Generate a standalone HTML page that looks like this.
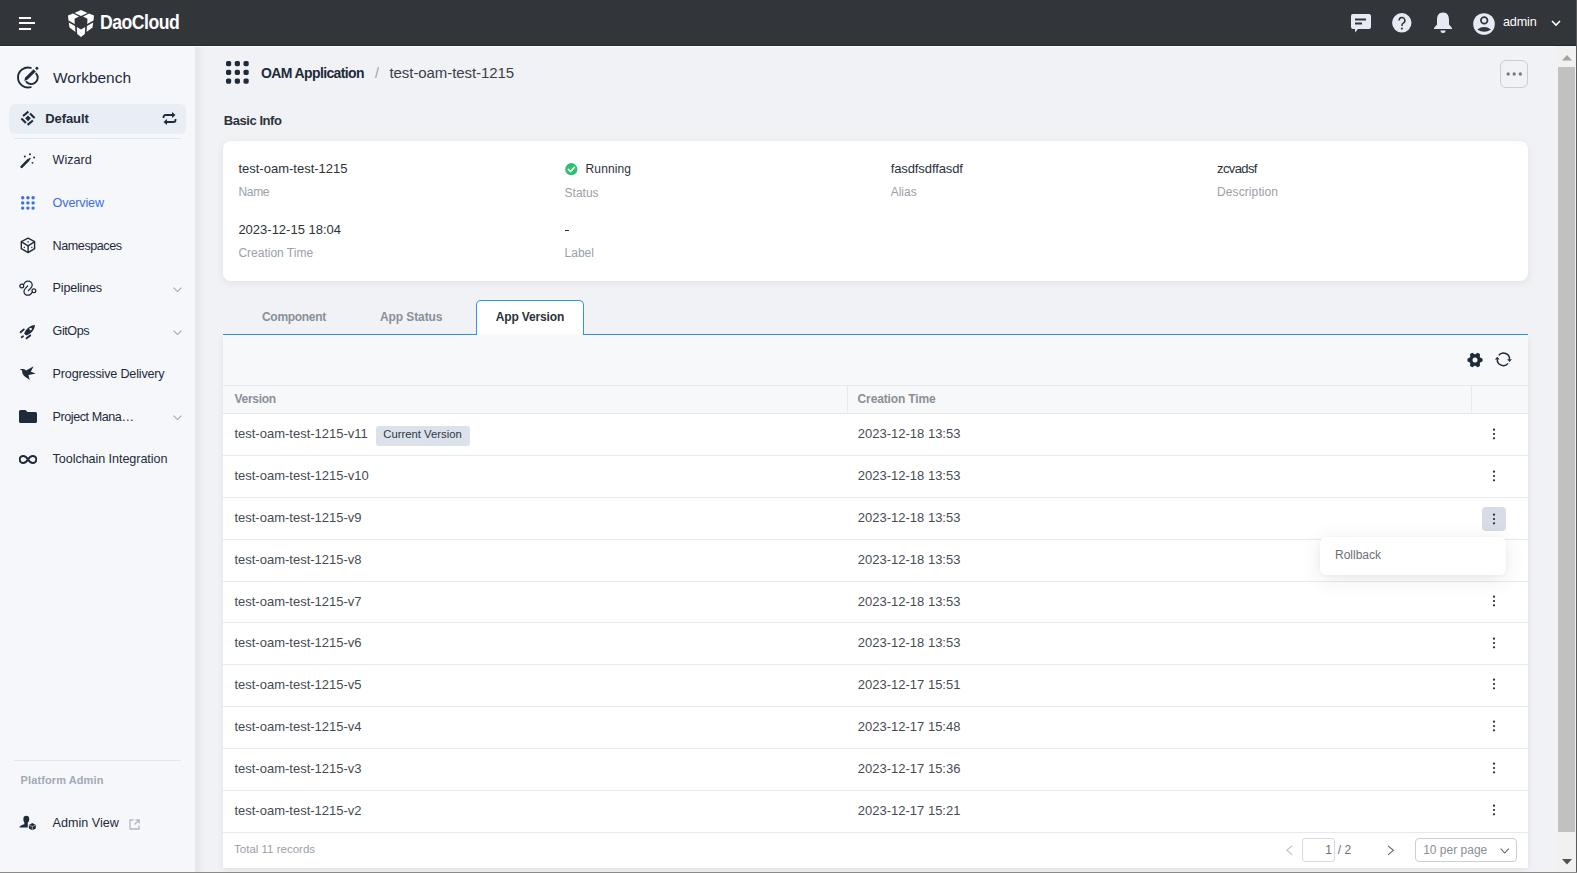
<!DOCTYPE html>
<html><head><meta charset="utf-8"><title>OAM Application</title>
<style>
html,body{margin:0;padding:0;width:1577px;height:873px;overflow:hidden;font-family:"Liberation Sans", sans-serif;}
.t{position:absolute;white-space:nowrap;line-height:1;}
svg{display:block}
</style></head><body>
<div style="position:absolute;left:0px;top:0px;width:1577px;height:873px;background:#f1f2f6"></div>
<div style="position:absolute;left:0px;top:46px;width:195px;height:827px;background:#f5f7fb"></div>
<div style="position:absolute;left:195px;top:46px;width:10px;height:827px;background:linear-gradient(to right, rgba(0,0,0,0.05), rgba(0,0,0,0))"></div>
<div style="position:absolute;left:0px;top:0px;width:1577px;height:45px;background:#32353a"></div>
<div style="position:absolute;left:0px;top:45px;width:1577px;height:1px;background:#26282c"></div>
<div style="position:absolute;left:0px;top:46px;width:1577px;height:1px;background:#ffffff"></div>
<svg style="position:absolute;left:19px;top:17px;" width="17" height="13" viewBox="0 0 17 13"><rect x="0" y="0" width="12" height="2" fill="#fff"/><rect x="0" y="5" width="16" height="2" fill="#fff"/><rect x="0" y="11" width="12" height="2" fill="#fff"/></svg>
<svg style="position:absolute;left:68px;top:10px;" width="26" height="27" viewBox="0 0 26 27"><g fill="#fff"><path d="M13 0 L19.5 3 L13 6 L6.5 3 Z"/><path d="M0 5.5 L5 3.5 L11 6.5 L6.5 8.8 L6.8 14 L0.5 10.5 Z"/><path d="M26 5.5 L21 3.5 L15 6.5 L19.5 8.8 L19.2 14 L25.5 10.5 Z"/><path d="M0.8 12.5 L7 16 L7.5 22 L1.5 17.5 Z"/><path d="M25.2 12.5 L19 16 L18.5 22 L24.5 17.5 Z"/><path d="M8.8 17 L13 19.5 L17.2 17 L16.8 24 L13 27 L9.2 24 Z"/></g></svg>
<div class="t" style="left:100px;top:11px;font-size:21px;color:#fff;font-weight:bold;letter-spacing:-0.6px;transform:scaleX(0.84);transform-origin:0 0;">DaoCloud</div>
<svg style="position:absolute;left:1351px;top:14px;" width="20" height="19" viewBox="0 0 20 19"><path d="M2 0 H18 A2 2 0 0 1 20 2 V13 A2 2 0 0 1 18 15 H7 L4 18.5 L4 15 H2 A2 2 0 0 1 0 13 V2 A2 2 0 0 1 2 0 Z" fill="#e6ebf3"/><rect x="4" y="4.5" width="11" height="2" fill="#32353a"/><rect x="4" y="8.5" width="7" height="2" fill="#32353a"/></svg>
<svg style="position:absolute;left:1391.5px;top:12.5px;" width="20" height="20" viewBox="0 0 20 20"><circle cx="9.8" cy="9.8" r="9.7" fill="#e6ebf3"/><path d="M7.1 7.4 A2.9 2.9 0 1 1 11.2 10.1 C10.2 10.7 9.9 11.3 9.9 12.9" stroke="#32353a" stroke-width="1.5" fill="none"/><circle cx="9.9" cy="15.6" r="1.05" fill="#32353a"/></svg>
<svg style="position:absolute;left:1433px;top:12px;" width="20" height="21" viewBox="0 0 20 21"><path d="M10 0.5 C14.5 0.5 16 4 16 8 V12.5 L19 16 V17 H1 V16 L4 12.5 V8 C4 4 5.5 0.5 10 0.5 Z" fill="#e6ebf3"/><path d="M7.5 18.5 H12.5 A2.5 2.5 0 0 1 7.5 18.5 Z" fill="#e6ebf3"/></svg>
<svg style="position:absolute;left:1473px;top:12.5px;" width="22" height="22" viewBox="0 0 22 22"><circle cx="11" cy="11" r="10.8" fill="#e6ebf3"/><circle cx="11.2" cy="7.4" r="3.3" fill="none" stroke="#32353a" stroke-width="1.7"/><path d="M4.3 16.5 Q11.2 11.6 18 16.5 Q11.2 21.2 4.3 16.5 Z" fill="#32353a"/></svg>
<div class="t" style="left:1503px;top:16px;font-size:12.6px;color:#fff;letter-spacing:-0.15px;">admin</div>
<svg style="position:absolute;left:1551px;top:20px;" width="10" height="7" viewBox="0 0 10 7"><path d="M1 1 L5 5 L9 1" stroke="#fff" stroke-width="1.6" fill="none"/></svg>
<svg style="position:absolute;left:12px;top:62px;" width="32" height="30" viewBox="0 0 32 30"><g fill="none" stroke="#1f2b3a" stroke-width="1.9" stroke-linecap="round"><path d="M18.8 5.9 A10 10 0 1 0 18.8 25.1"/><path d="M24.2 11.6 A6.3 6.3 0 1 1 14.4 19.8"/></g><path d="M12.2 19 L13.2 15.6 L21.6 7.2 L23.8 9.4 L15.4 17.8 Z" fill="#1f2b3a"/><rect x="23.6" y="5" width="2.6" height="2.6" transform="rotate(45 24.9 6.3)" fill="#1f2b3a"/></svg>
<div class="t" style="left:53px;top:70px;font-size:15.5px;color:#1f2b3a;">Workbench</div>
<div style="position:absolute;left:9px;top:104px;width:177px;height:30px;background:#e9edf4;border-radius:6px"></div>
<svg style="position:absolute;left:16px;top:106px;" width="24" height="24" viewBox="0 0 24 24"><g stroke="#1f2b3a" stroke-width="2.1" stroke-linecap="butt"><path d="M7.0 10.0 L12.4 5.6"/><path d="M14.0 7.6 L18.6 12.0"/><path d="M16.9 14.5 L11.6 18.9"/><path d="M5.4 12.5 L9.9 16.9"/></g><rect x="10" y="10.3" width="4" height="4" transform="rotate(45 12 12.3)" fill="#1f2b3a"/></svg>
<div class="t" style="left:45.3px;top:112px;font-size:13px;color:#1f2b3a;font-weight:bold;letter-spacing:-0.1px;">Default</div>
<svg style="position:absolute;left:162px;top:112px;" width="15" height="13" viewBox="0 0 15 13"><path d="M1.5 6 V5 A2 2 0 0 1 3.5 3 H12" stroke="#1f2b3a" stroke-width="1.8" fill="none"/><path d="M10 0 L13.5 3 L10 6 Z" fill="#1f2b3a"/><path d="M13.5 7 V8 A2 2 0 0 1 11.5 10 H3" stroke="#1f2b3a" stroke-width="1.8" fill="none"/><path d="M5 7 L1.5 10 L5 13 Z" fill="#1f2b3a"/></svg>
<div style="position:absolute;left:14px;top:138px;width:167px;height:1px;background:#e2e6ee"></div>
<div class="t" style="left:52.6px;top:154px;font-size:12.6px;color:#1f2b3a;letter-spacing:0px;">Wizard</div>
<div class="t" style="left:52.6px;top:197px;font-size:12.6px;color:#3a6fe0;letter-spacing:-0.15px;">Overview</div>
<div class="t" style="left:52.6px;top:240px;font-size:12.6px;color:#1f2b3a;letter-spacing:-0.45px;">Namespaces</div>
<div class="t" style="left:52.6px;top:282px;font-size:12.6px;color:#1f2b3a;letter-spacing:-0.2px;">Pipelines</div>
<div class="t" style="left:52.6px;top:325px;font-size:12.6px;color:#1f2b3a;letter-spacing:-0.45px;">GitOps</div>
<div class="t" style="left:52.6px;top:368px;font-size:12.6px;color:#1f2b3a;letter-spacing:-0.18px;">Progressive Delivery</div>
<div class="t" style="left:52.6px;top:411px;font-size:12.6px;color:#1f2b3a;letter-spacing:-0.45px;">Project Mana…</div>
<div class="t" style="left:52.6px;top:453px;font-size:12.6px;color:#1f2b3a;letter-spacing:-0.07px;">Toolchain Integration</div>
<svg style="position:absolute;left:16px;top:148px;" width="24" height="24" viewBox="0 0 24 24"><path d="M5.6 18.8 L12.2 12.2" stroke="#1f2b3a" stroke-width="2.6" stroke-linecap="round"/><path d="M12.6 11.8 L14 10.4" stroke="#1f2b3a" stroke-width="1.4" stroke-linecap="round"/><circle cx="14" cy="6.2" r="1" fill="#1f2b3a"/><circle cx="8.8" cy="8.5" r="1" fill="#1f2b3a"/><circle cx="18.1" cy="9.5" r="1" fill="#1f2b3a"/><circle cx="16.5" cy="14.8" r="0.9" fill="#1f2b3a"/></svg>
<svg style="position:absolute;left:21px;top:196px;" width="15" height="15" viewBox="0 0 15 15"><circle cx="1.7" cy="1.7" r="1.7" fill="#3a6fe0"/><circle cx="6.9" cy="1.7" r="1.7" fill="#3a6fe0"/><circle cx="12.1" cy="1.7" r="1.7" fill="#3a6fe0"/><circle cx="1.7" cy="6.9" r="1.7" fill="#3a6fe0"/><circle cx="6.9" cy="6.9" r="1.7" fill="#3a6fe0"/><circle cx="12.1" cy="6.9" r="1.7" fill="#3a6fe0"/><circle cx="1.7" cy="12.1" r="1.7" fill="#3a6fe0"/><circle cx="6.9" cy="12.1" r="1.7" fill="#3a6fe0"/><circle cx="12.1" cy="12.1" r="1.7" fill="#3a6fe0"/></svg>
<svg style="position:absolute;left:16px;top:234px;" width="24" height="24" viewBox="0 0 24 24"><g fill="none" stroke="#1f2b3a" stroke-width="1.4" stroke-linejoin="round"><path d="M12.1 4.2 L18.6 7.6 V14.7 L12.1 18.6 L5.3 14.7 V7.6 Z"/><path d="M5.5 7.8 L12.1 11.8 L18.4 7.8"/><path d="M12.1 11.8 V18.4"/><path d="M12.1 7.2 V8.6"/><path d="M7.8 13.2 L8.8 13.6"/><path d="M15.3 13.6 L16.3 13.2"/></g></svg>
<svg style="position:absolute;left:16px;top:276px;" width="24" height="24" viewBox="0 0 24 24"><g fill="none" stroke="#1f2b3a" stroke-width="1.25" stroke-linecap="round"><circle cx="5.8" cy="9.9" r="1.9"/><circle cx="17.9" cy="14.8" r="1.9"/><path d="M7.6 8.6 C8.5 6.4 10 5 12 5 C14.4 5 16.2 7 16.2 9.2 C16.2 10.6 15.4 11.6 12.4 14.5"/><path d="M11.6 10 L9.2 12.6 C7.6 14.2 7.6 16.8 9.1 18.2 C10.6 19.6 13.2 19.5 14.5 18.2 L16.4 16.2"/></g></svg>
<svg style="position:absolute;left:16px;top:320px;" width="24" height="24" viewBox="0 0 24 24"><path d="M19 4.9 C14.2 5.3 10.2 8.3 8.1 13.4 L10.3 15.6 C15.3 13.6 18.4 9.8 19 4.9 Z" fill="#1f2b3a"/><circle cx="14.6" cy="8.9" r="1.25" fill="#f5f7fb"/><g stroke="#1f2b3a" stroke-width="1.9" stroke-linecap="round"><path d="M4.6 12.2 L7.8 9.4"/><path d="M10.6 18.3 L14.2 15.4"/><path d="M5.7 17.2 L7.0 16.3"/></g></svg>
<svg style="position:absolute;left:16px;top:362px;" width="24" height="24" viewBox="0 0 24 24"><path d="M3.8 7.3 C6 6.8 8.5 7.3 10.2 8.4 L17.6 4.3 L14.8 9.7 L19.8 11.5 L12.5 13 L13.7 17.9 C11 16 8.2 14.5 7 12.5 C6.3 11 6.1 9.5 6 8.4 Z" fill="#1f2b3a"/></svg>
<svg style="position:absolute;left:19px;top:410px;" width="18" height="13" viewBox="0 0 18 13"><path d="M0 1.5 A1.5 1.5 0 0 1 1.5 0 H6.5 L8.5 2 H16.5 A1.5 1.5 0 0 1 18 3.5 V11.5 A1.5 1.5 0 0 1 16.5 13 H1.5 A1.5 1.5 0 0 1 0 11.5 Z" fill="#1f2b3a"/></svg>
<svg style="position:absolute;left:19px;top:455px;" width="18" height="9" viewBox="0 0 18 9"><path d="M9 4.5 C7.5 2 6 1 4.2 1 A3.5 3.5 0 0 0 4.2 8 C6 8 7.5 7 9 4.5 C10.5 2 12 1 13.8 1 A3.5 3.5 0 0 1 13.8 8 C12 8 10.5 7 9 4.5 Z" fill="none" stroke="#1f2b3a" stroke-width="2"/></svg>
<svg style="position:absolute;left:172.7px;top:286.6px;" width="9" height="5.5" viewBox="0 0 9 5.5"><path d="M0.6 0.6 L4.5 4.6 L8.4 0.6" stroke="#a4abb8" stroke-width="1.1" fill="none"/></svg>
<svg style="position:absolute;left:172.7px;top:329.6px;" width="9" height="5.5" viewBox="0 0 9 5.5"><path d="M0.6 0.6 L4.5 4.6 L8.4 0.6" stroke="#a4abb8" stroke-width="1.1" fill="none"/></svg>
<svg style="position:absolute;left:172.7px;top:414.6px;" width="9" height="5.5" viewBox="0 0 9 5.5"><path d="M0.6 0.6 L4.5 4.6 L8.4 0.6" stroke="#a4abb8" stroke-width="1.1" fill="none"/></svg>
<div style="position:absolute;left:14px;top:760px;width:167px;height:1px;background:#e2e6ee"></div>
<div class="t" style="left:20.6px;top:775px;font-size:11px;color:#a3a9b4;font-weight:bold;letter-spacing:0.1px;">Platform Admin</div>
<svg style="position:absolute;left:16px;top:811px;" width="24" height="24" viewBox="0 0 24 24"><path d="M7.4 7.6 A2.9 2.9 0 0 1 13.2 7.6 V9 A2.9 2.9 0 0 1 11.8 11.4 V16.6 H3.3 C3.6 14.8 5.8 13.6 8.3 13.2 V11.3 A2.9 2.9 0 0 1 7.4 9 Z" fill="#1f2b3a"/><path d="M16.3 12.1 L19.8 13.9 V17.6 L16.3 19.3 L12.9 17.6 V13.9 Z" fill="#1f2b3a"/><path d="M13.1 14 L16.3 15.6 L19.6 14 M16.3 15.6 V19.2" stroke="#c9d3e0" stroke-width="0.7" fill="none"/></svg>
<div class="t" style="left:52.6px;top:817px;font-size:12.6px;color:#1f2b3a;">Admin View</div>
<svg style="position:absolute;left:128.5px;top:818.5px;" width="11" height="11" viewBox="0 0 11 11"><path d="M4.5 1 H1 V10 H10 V6.5" stroke="#b2b8c3" stroke-width="1.3" fill="none"/><path d="M5.5 5.5 L10 1 M6.5 0.8 H10.2 V4.5" stroke="#b2b8c3" stroke-width="1.3" fill="none"/></svg>
<svg style="position:absolute;left:226.1px;top:61.3px;" width="24" height="24" viewBox="0 0 24 24"><rect x="0.0" y="0.0" width="5.2" height="5.2" rx="1.6" fill="#1f2b3a"/><rect x="8.75" y="0.0" width="5.2" height="5.2" rx="1.6" fill="#1f2b3a"/><rect x="17.5" y="0.0" width="5.2" height="5.2" rx="1.6" fill="#1f2b3a"/><rect x="0.0" y="8.75" width="5.2" height="5.2" rx="1.6" fill="#1f2b3a"/><rect x="8.75" y="8.75" width="5.2" height="5.2" rx="1.6" fill="#1f2b3a"/><rect x="17.5" y="8.75" width="5.2" height="5.2" rx="1.6" fill="#1f2b3a"/><rect x="0.0" y="17.5" width="5.2" height="5.2" rx="1.6" fill="#1f2b3a"/><rect x="8.75" y="17.5" width="5.2" height="5.2" rx="1.6" fill="#1f2b3a"/><rect x="17.5" y="17.5" width="5.2" height="5.2" rx="1.6" fill="#1f2b3a"/></svg>
<div class="t" style="left:261px;top:66px;font-size:14px;color:#1f2b3a;font-weight:bold;letter-spacing:-0.62px;">OAM Application</div>
<div class="t" style="left:375px;top:66px;font-size:14px;color:#9aa0a9;">/</div>
<div class="t" style="left:389.5px;top:65px;font-size:15px;color:#3a4049;letter-spacing:-0.07px;">test-oam-test-1215</div>
<div style="position:absolute;left:1500px;top:60px;width:26px;height:26px;border:1px solid #c9cfd9;border-radius:6px;"></div>
<svg style="position:absolute;left:1506px;top:71.5px;" width="16" height="4" viewBox="0 0 16 4"><circle cx="2.2" cy="2" r="1.65" fill="#727986"/><circle cx="8.2" cy="2" r="1.65" fill="#727986"/><circle cx="14.3" cy="2" r="1.65" fill="#727986"/></svg>
<div class="t" style="left:223.8px;top:114px;font-size:13px;color:#2c323b;font-weight:bold;letter-spacing:-0.45px;">Basic Info</div>
<div style="position:absolute;left:223px;top:141px;width:1305px;height:140px;background:#fff;border-radius:8px;box-shadow:0 2px 9px rgba(0,0,0,0.075)"></div>
<div class="t" style="left:238.4px;top:162px;font-size:13px;color:#2c323b;">test-oam-test-1215</div>
<div class="t" style="left:238.4px;top:186px;font-size:12px;color:#9ba0a8;letter-spacing:-0.3px;">Name</div>
<svg style="position:absolute;left:564.6px;top:163px;" width="13" height="13" viewBox="0 0 13 13"><circle cx="6.3" cy="6.2" r="6.1" fill="#2fbf71"/><path d="M3.4 6.4 L5.5 8.5 L9.4 4.4" stroke="#fff" stroke-width="1.7" fill="none" stroke-linecap="round" stroke-linejoin="round"/></svg>
<div class="t" style="left:585.6px;top:163px;font-size:12px;color:#2c323b;letter-spacing:0.1px;">Running</div>
<div class="t" style="left:564.6px;top:187px;font-size:12px;color:#9ba0a8;">Status</div>
<div class="t" style="left:890.7px;top:162px;font-size:13px;color:#2c323b;letter-spacing:-0.1px;">fasdfsdffasdf</div>
<div class="t" style="left:890.7px;top:186px;font-size:12px;color:#9ba0a8;">Alias</div>
<div class="t" style="left:1217px;top:162px;font-size:13px;color:#2c323b;letter-spacing:-0.6px;">zcvadsf</div>
<div class="t" style="left:1217px;top:186px;font-size:12px;color:#9ba0a8;letter-spacing:0.1px;">Description</div>
<div class="t" style="left:238.4px;top:223px;font-size:13px;color:#2c323b;">2023-12-15 18:04</div>
<div class="t" style="left:238.4px;top:247px;font-size:12px;color:#9ba0a8;">Creation Time</div>
<div style="position:absolute;left:565px;top:230px;width:4px;height:1.3px;background:#2c323b"></div>
<div class="t" style="left:564.6px;top:247px;font-size:12px;color:#9ba0a8;">Label</div>
<div style="position:absolute;left:223px;top:334px;width:1305px;height:1px;background:#2f96e4"></div>
<div style="position:absolute;left:476px;top:300px;width:105.5px;height:35px;background:#fff;border:1.2px solid #2f96e4;border-bottom:none;border-radius:5px 5px 0 0"></div>
<div class="t" style="left:262px;top:311px;font-size:12px;color:#8a8f97;font-weight:bold;letter-spacing:-0.3px;">Component</div>
<div class="t" style="left:380px;top:311px;font-size:12px;color:#8a8f97;font-weight:bold;letter-spacing:-0.1px;">App Status</div>
<div class="t" style="left:495.8px;top:311px;font-size:12px;color:#2c323b;font-weight:bold;letter-spacing:-0.15px;">App Version</div>
<div style="position:absolute;left:223px;top:335px;width:1305px;height:533px;background:#fff;box-shadow:0 2px 6px rgba(0,0,0,0.075)"></div>
<div style="position:absolute;left:223px;top:335px;width:1305px;height:78px;background:#f7f8fa"></div>
<div style="position:absolute;left:223px;top:385px;width:1305px;height:1px;background:#e6e9ee"></div>
<div style="position:absolute;left:223px;top:413px;width:1305px;height:1px;background:#e6e9ee"></div>
<div style="position:absolute;left:847px;top:386px;width:1px;height:27px;background:#e6e9ee"></div>
<div style="position:absolute;left:1471px;top:386px;width:1px;height:27px;background:#e6e9ee"></div>
<svg style="position:absolute;left:1467px;top:351.5px;" width="16" height="16" viewBox="0 0 16 16"><g transform="translate(8 8)"><path d="M5.21 -2.54 L7.58 -1.34 L7.58 1.34 L5.21 2.54 L4.81 3.24 L4.95 5.90 L2.63 7.24 L0.40 5.79 L-0.40 5.79 L-2.63 7.24 L-4.95 5.90 L-4.81 3.24 L-5.21 2.54 L-7.58 1.34 L-7.58 -1.34 L-5.21 -2.54 L-4.81 -3.24 L-4.95 -5.90 L-2.63 -7.24 L-0.40 -5.79 L0.40 -5.79 L2.63 -7.24 L4.95 -5.90 L4.81 -3.24 Z" fill="#1f2b3a"/><circle r="2.5" fill="#f7f8fa"/></g></svg>
<svg style="position:absolute;left:1490px;top:348px;" width="26" height="22" viewBox="0 0 26 22"><g fill="none" stroke="#1f2b3a" stroke-width="1.45"><path d="M8.7 7.3 A6.15 6.15 0 0 1 19.55 11.6"/><path d="M18.1 15.4 A6.15 6.15 0 0 1 7.25 11.2"/></g><path d="M17.2 11.3 L21.9 11.3 L19.55 14.0 Z" fill="#1f2b3a"/><path d="M4.9 11.5 L9.6 11.5 L7.25 8.8 Z" fill="#1f2b3a"/></svg>
<div class="t" style="left:234.5px;top:393px;font-size:12px;color:#8a8f97;font-weight:bold;letter-spacing:-0.3px;">Version</div>
<div class="t" style="left:857.6px;top:393px;font-size:12px;color:#8a8f97;font-weight:bold;letter-spacing:-0.15px;">Creation Time</div>
<div class="t" style="left:234.4px;top:427px;font-size:13px;color:#464b53;">test-oam-test-1215-v11</div>
<div class="t" style="left:857.8px;top:427px;font-size:13px;color:#464b53;">2023-12-18 13:53</div>
<div style="position:absolute;left:223px;top:455px;width:1305px;height:1px;background:#e6e9ee"></div>
<svg style="position:absolute;left:1491.75px;top:427.8px;" width="4" height="12" viewBox="0 0 4 12"><circle cx="2" cy="1.7" r="1.1" fill="#1f2b3a"/><circle cx="2" cy="6" r="1.1" fill="#1f2b3a"/><circle cx="2" cy="10.3" r="1.1" fill="#1f2b3a"/></svg>
<div style="position:absolute;left:376px;top:426px;width:94px;height:20px;background:#dce2ec;border-radius:3px"></div>
<div class="t" style="left:383.3px;top:429px;font-size:11.3px;color:#2f3744;">Current Version</div>
<div class="t" style="left:234.4px;top:469px;font-size:13px;color:#464b53;">test-oam-test-1215-v10</div>
<div class="t" style="left:857.8px;top:469px;font-size:13px;color:#464b53;">2023-12-18 13:53</div>
<div style="position:absolute;left:223px;top:497px;width:1305px;height:1px;background:#e6e9ee"></div>
<svg style="position:absolute;left:1491.75px;top:469.58px;" width="4" height="12" viewBox="0 0 4 12"><circle cx="2" cy="1.7" r="1.1" fill="#1f2b3a"/><circle cx="2" cy="6" r="1.1" fill="#1f2b3a"/><circle cx="2" cy="10.3" r="1.1" fill="#1f2b3a"/></svg>
<div class="t" style="left:234.4px;top:511px;font-size:13px;color:#464b53;">test-oam-test-1215-v9</div>
<div class="t" style="left:857.8px;top:511px;font-size:13px;color:#464b53;">2023-12-18 13:53</div>
<div style="position:absolute;left:223px;top:539px;width:1305px;height:1px;background:#e6e9ee"></div>
<div style="position:absolute;left:1482.2px;top:507px;width:23.7px;height:23.8px;background:#d7dce6;border-radius:4px"></div>
<svg style="position:absolute;left:1491.75px;top:512.56px;" width="4" height="12" viewBox="0 0 4 12"><circle cx="2" cy="1.7" r="1.1" fill="#1f2b3a"/><circle cx="2" cy="6" r="1.1" fill="#1f2b3a"/><circle cx="2" cy="10.3" r="1.1" fill="#1f2b3a"/></svg>
<div class="t" style="left:234.4px;top:553px;font-size:13px;color:#464b53;">test-oam-test-1215-v8</div>
<div class="t" style="left:857.8px;top:553px;font-size:13px;color:#464b53;">2023-12-18 13:53</div>
<div style="position:absolute;left:223px;top:581px;width:1305px;height:1px;background:#e6e9ee"></div>
<svg style="position:absolute;left:1491.75px;top:553.14px;" width="4" height="12" viewBox="0 0 4 12"><circle cx="2" cy="1.7" r="1.1" fill="#1f2b3a"/><circle cx="2" cy="6" r="1.1" fill="#1f2b3a"/><circle cx="2" cy="10.3" r="1.1" fill="#1f2b3a"/></svg>
<div class="t" style="left:234.4px;top:595px;font-size:13px;color:#464b53;">test-oam-test-1215-v7</div>
<div class="t" style="left:857.8px;top:595px;font-size:13px;color:#464b53;">2023-12-18 13:53</div>
<div style="position:absolute;left:223px;top:622px;width:1305px;height:1px;background:#e6e9ee"></div>
<svg style="position:absolute;left:1491.75px;top:594.92px;" width="4" height="12" viewBox="0 0 4 12"><circle cx="2" cy="1.7" r="1.1" fill="#1f2b3a"/><circle cx="2" cy="6" r="1.1" fill="#1f2b3a"/><circle cx="2" cy="10.3" r="1.1" fill="#1f2b3a"/></svg>
<div class="t" style="left:234.4px;top:636px;font-size:13px;color:#464b53;">test-oam-test-1215-v6</div>
<div class="t" style="left:857.8px;top:636px;font-size:13px;color:#464b53;">2023-12-18 13:53</div>
<div style="position:absolute;left:223px;top:664px;width:1305px;height:1px;background:#e6e9ee"></div>
<svg style="position:absolute;left:1491.75px;top:636.6999999999999px;" width="4" height="12" viewBox="0 0 4 12"><circle cx="2" cy="1.7" r="1.1" fill="#1f2b3a"/><circle cx="2" cy="6" r="1.1" fill="#1f2b3a"/><circle cx="2" cy="10.3" r="1.1" fill="#1f2b3a"/></svg>
<div class="t" style="left:234.4px;top:678px;font-size:13px;color:#464b53;">test-oam-test-1215-v5</div>
<div class="t" style="left:857.8px;top:678px;font-size:13px;color:#464b53;">2023-12-17 15:51</div>
<div style="position:absolute;left:223px;top:706px;width:1305px;height:1px;background:#e6e9ee"></div>
<svg style="position:absolute;left:1491.75px;top:678.48px;" width="4" height="12" viewBox="0 0 4 12"><circle cx="2" cy="1.7" r="1.1" fill="#1f2b3a"/><circle cx="2" cy="6" r="1.1" fill="#1f2b3a"/><circle cx="2" cy="10.3" r="1.1" fill="#1f2b3a"/></svg>
<div class="t" style="left:234.4px;top:720px;font-size:13px;color:#464b53;">test-oam-test-1215-v4</div>
<div class="t" style="left:857.8px;top:720px;font-size:13px;color:#464b53;">2023-12-17 15:48</div>
<div style="position:absolute;left:223px;top:748px;width:1305px;height:1px;background:#e6e9ee"></div>
<svg style="position:absolute;left:1491.75px;top:720.26px;" width="4" height="12" viewBox="0 0 4 12"><circle cx="2" cy="1.7" r="1.1" fill="#1f2b3a"/><circle cx="2" cy="6" r="1.1" fill="#1f2b3a"/><circle cx="2" cy="10.3" r="1.1" fill="#1f2b3a"/></svg>
<div class="t" style="left:234.4px;top:762px;font-size:13px;color:#464b53;">test-oam-test-1215-v3</div>
<div class="t" style="left:857.8px;top:762px;font-size:13px;color:#464b53;">2023-12-17 15:36</div>
<div style="position:absolute;left:223px;top:790px;width:1305px;height:1px;background:#e6e9ee"></div>
<svg style="position:absolute;left:1491.75px;top:762.04px;" width="4" height="12" viewBox="0 0 4 12"><circle cx="2" cy="1.7" r="1.1" fill="#1f2b3a"/><circle cx="2" cy="6" r="1.1" fill="#1f2b3a"/><circle cx="2" cy="10.3" r="1.1" fill="#1f2b3a"/></svg>
<div class="t" style="left:234.4px;top:804px;font-size:13px;color:#464b53;">test-oam-test-1215-v2</div>
<div class="t" style="left:857.8px;top:804px;font-size:13px;color:#464b53;">2023-12-17 15:21</div>
<svg style="position:absolute;left:1491.75px;top:803.8199999999999px;" width="4" height="12" viewBox="0 0 4 12"><circle cx="2" cy="1.7" r="1.1" fill="#1f2b3a"/><circle cx="2" cy="6" r="1.1" fill="#1f2b3a"/><circle cx="2" cy="10.3" r="1.1" fill="#1f2b3a"/></svg>
<div style="position:absolute;left:223px;top:832px;width:1305px;height:1px;background:#e6e9ee"></div>
<div class="t" style="left:234.1px;top:844px;font-size:11.5px;color:#9ba0a8;">Total 11 records</div>
<svg style="position:absolute;left:1285px;top:845px;" width="9" height="11" viewBox="0 0 9 11"><path d="M7.2 0.8 L1.8 5.3 L7.2 9.8" stroke="#c3c8d0" stroke-width="1.2" fill="none"/></svg>
<div style="position:absolute;left:1302px;top:838px;width:33px;height:24px;box-sizing:border-box;border:1px solid #d6dae1;border-radius:3px"></div>
<div class="t" style="left:1325.2px;top:844px;font-size:12px;color:#6b7078;">1</div>
<div class="t" style="left:1337.8px;top:844px;font-size:12px;color:#6b7078;">/ 2</div>
<svg style="position:absolute;left:1387px;top:845px;" width="8" height="11" viewBox="0 0 8 11"><path d="M1 0.8 L6.4 5.3 L1 9.8" stroke="#5f656e" stroke-width="1.1" fill="none"/></svg>
<div style="position:absolute;left:1415px;top:838px;width:102px;height:24px;box-sizing:border-box;border:1px solid #c9ced8;border-radius:4px"></div>
<div class="t" style="left:1423.2px;top:844px;font-size:12px;color:#8a8f97;">10 per page</div>
<svg style="position:absolute;left:1500px;top:847.5px;" width="9.5" height="6" viewBox="0 0 9.5 6"><path d="M0.6 0.6 L4.7 5 L8.8 0.6" stroke="#5f656e" stroke-width="1.1" fill="none"/></svg>
<div style="position:absolute;left:1320px;top:537px;width:186px;height:37.5px;background:#fff;border-radius:6px;box-shadow:0 4px 22px rgba(0,0,0,0.09), 0 1px 4px rgba(0,0,0,0.04)"></div>
<div class="t" style="left:1335px;top:549px;font-size:12px;color:#6b6f76;">Rollback</div>
<div style="position:absolute;left:1556px;top:46px;width:20px;height:827px;background:#f1f1f1"></div>
<div style="position:absolute;left:1558px;top:67px;width:17px;height:765px;background:#c1c1c1"></div>
<svg style="position:absolute;left:1561.5px;top:54.5px;" width="10" height="6" viewBox="0 0 10 6"><path d="M0 5.5 L5 0 L10 5.5 Z" fill="#a3a3a3"/></svg>
<svg style="position:absolute;left:1561.5px;top:858.5px;" width="10" height="6" viewBox="0 0 10 6"><path d="M0 0 L5 5.5 L10 0 Z" fill="#505050"/></svg>
<div style="position:absolute;left:1576px;top:0px;width:1px;height:873px;background:#5a5a5a"></div>
<div style="position:absolute;left:0px;top:871.5px;width:1577px;height:1.5px;background:#8a8a8a"></div>
</body></html>
